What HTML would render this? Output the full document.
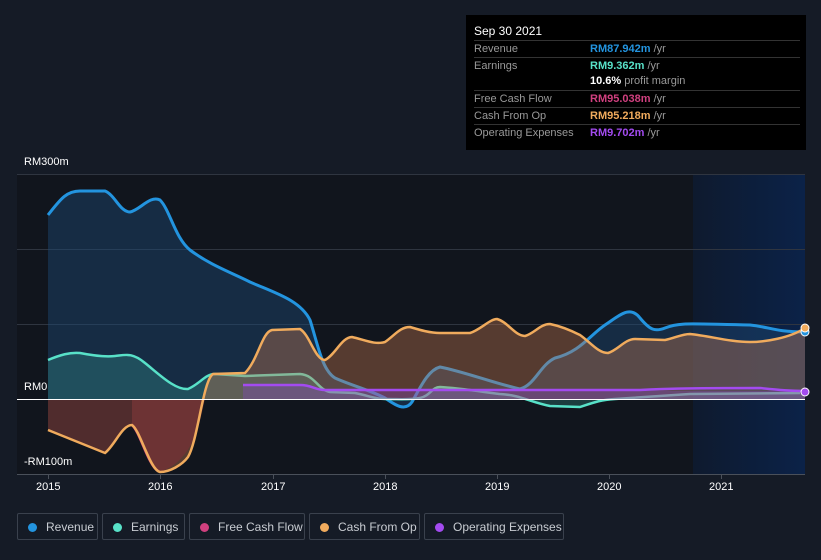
<!DOCTYPE html>
<html><head><meta charset="utf-8"><style>
body{margin:0;background:#151b26;width:821px;height:560px;overflow:hidden;font-family:"Liberation Sans",sans-serif;position:relative}
.tt{position:absolute;left:466px;top:15px;width:340px;height:135px;background:#000;color:#fff;font-size:11px}
.tt .h{position:absolute;left:8px;top:9px;font-size:12px}
.row{position:absolute;left:8px;width:326px;height:17px;border-top:1px solid #333;line-height:16px}
.row .l{position:absolute;left:0;color:#999}
.row .v{position:absolute;left:116px;color:#999}
.lg{position:absolute;top:513px;height:27px;border:1px solid #3a414d;border-radius:2px;color:#c8ccd2;font-size:12px;line-height:27px;box-sizing:border-box}
.lg i{display:inline-block;width:9px;height:9px;border-radius:50%;margin:0 9px 0 10px;vertical-align:-1px}
.ax{position:absolute;color:#fff;font-size:11px}
</style></head><body>
<svg width="821" height="560" style="position:absolute;left:0;top:0">
<defs><linearGradient id="fc" x1="0" x2="1"><stop offset="0" stop-color="#0e1a2e"/><stop offset="1" stop-color="#0b2248"/></linearGradient></defs>
<rect x="17" y="174" width="676" height="300" fill="#11151d"/>
<rect x="693" y="174" width="112" height="300" fill="url(#fc)"/>
<g stroke="#2f3540" stroke-width="1"><line x1="17" y1="174.5" x2="805" y2="174.5"/><line x1="17" y1="249.5" x2="805" y2="249.5"/><line x1="17" y1="324.5" x2="805" y2="324.5"/><line x1="17" y1="474.5" x2="805" y2="474.5" stroke="#4a505a"/></g>
<g stroke="#4a505a"><line x1="48.5" y1="474" x2="48.5" y2="479"/><line x1="160.5" y1="474" x2="160.5" y2="479"/><line x1="273.5" y1="474" x2="273.5" y2="479"/><line x1="385.5" y1="474" x2="385.5" y2="479"/><line x1="497.5" y1="474" x2="497.5" y2="479"/><line x1="609.5" y1="474" x2="609.5" y2="479"/><line x1="721.5" y1="474" x2="721.5" y2="479"/></g>
<!-- revenue -->
<path d="M48,399 L48,215 C60,200 66,191 80,191 L105,191 C115,195 120,212 130,212 C140,210 150,195 160,200 C170,210 175,238 190,250 C210,265 230,272 250,282 C275,293 300,300 310,320 C318,345 322,370 335,378 C350,385 370,390 385,398 C395,405 405,412 412,402 C420,388 428,370 440,367 C465,372 490,382 520,389 C535,385 540,365 555,358 C580,352 590,335 605,325 C620,315 630,305 640,318 C650,330 655,332 665,328 C680,322 690,324 750,325 C770,327 775,332 805,332 L805,399 Z" fill="#1d4a75" fill-opacity="0.45" stroke="none"/>
<path d="M48,215 C60,200 66,191 80,191 L105,191 C115,195 120,212 130,212 C140,210 150,195 160,200 C170,210 175,238 190,250 C210,265 230,272 250,282 C275,293 300,300 310,320 C318,345 322,370 335,378 C350,385 370,390 385,398 C395,405 405,412 412,402 C420,388 428,370 440,367 C465,372 490,382 520,389 C535,385 540,365 555,358 C580,352 590,335 605,325 C620,315 630,305 640,318 C650,330 655,332 665,328 C680,322 690,324 750,325 C770,327 775,332 805,332" fill="none" stroke="#2394df" stroke-width="3"/>
<!-- earnings -->
<path d="M48,399 L48,360 C60,355 70,352 80,353 C95,356 105,357 115,356 C125,355 132,352 145,363 C160,375 175,390 188,389 C200,384 205,374 215,374 L245,376 L300,374 C315,375 318,390 330,392 L355,393 C370,396 375,399 385,399 C400,399 410,400 420,398 C430,396 432,387 440,387 C460,388 490,393 500,394 C520,395 530,402 550,406 L580,407 C595,402 600,400 615,399 L690,394 L800,393 L805,399 Z" fill="#3fb6a8" fill-opacity="0.25"/>
<path d="M48,360 C60,355 70,352 80,353 C95,356 105,357 115,356 C125,355 132,352 145,363 C160,375 175,390 188,389 C200,384 205,374 215,374 L245,376 L300,374 C315,375 318,390 330,392 L355,393 C370,396 375,399 385,399 C400,399 410,400 420,398 C430,396 432,387 440,387 C460,388 490,393 500,394 C520,395 530,402 550,406 L580,407 C595,402 600,400 615,399 L690,394 L800,393" fill="none" stroke="#58e1c8" stroke-width="2.5"/>
<!-- cfo -->
<path d="M48,399 L48,430 L105,453 C115,445 122,425 132,425 C140,430 150,470 160,472 C170,472 182,465 188,457 C198,440 203,380 213,374 L245,373 C258,360 262,332 272,330 L300,329 C310,335 315,360 325,360 C335,355 342,337 352,337 C365,340 375,345 385,342 C395,335 400,327 410,327 C420,330 430,333 440,333 L470,333 C480,330 490,319 497,319 C508,322 515,336 525,336 C535,333 540,324 550,324 C560,326 570,330 580,335 C590,342 598,353 608,353 C618,350 625,339 635,339 L665,340 C675,338 682,334 690,334 C710,336 730,342 750,342 C765,342 790,338 805,328 L805,399 Z" fill="#c97a50" fill-opacity="0.38"/>
<path d="M132,425 L132,399 L205,399 C200,420 195,460 160,472 C150,470 140,430 132,425 Z" fill="#8a2a3a" fill-opacity="0.45"/>
<path d="M48,399 L48,430 L105,453 C115,445 122,425 132,425 L132,399 Z" fill="#4a1e2a" fill-opacity="0.5"/>
<path d="M132,425 C140,432 148,465 158,471" fill="none" stroke="#d0407f" stroke-width="2.5"/>
<path d="M48,430 L105,453 C115,445 122,425 132,425 C140,430 150,470 160,472 C170,472 182,465 188,457 C198,440 203,380 213,374 L245,373 C258,360 262,332 272,330 L300,329 C310,335 315,360 325,360 C335,355 342,337 352,337 C365,340 375,345 385,342 C395,335 400,327 410,327 C420,330 430,333 440,333 L470,333 C480,330 490,319 497,319 C508,322 515,336 525,336 C535,333 540,324 550,324 C560,326 570,330 580,335 C590,342 598,353 608,353 C618,350 625,339 635,339 L665,340 C675,338 682,334 690,334 C710,336 730,342 750,342 C765,342 790,338 805,328" fill="none" stroke="#f0ab5d" stroke-width="2.5"/>
<!-- opex -->
<path d="M243,399 L243,385 L300,385 C312,385 315,390 325,390 L805,391 L805,399 Z" fill="#8c45d8" fill-opacity="0.3"/>
<path d="M243,385 L300,385 C312,385 315,390 325,390 L640,390 C660,389 680,388 760,388 C780,390 790,391 805,391" fill="none" stroke="#a34bf0" stroke-width="2.5"/>
<line x1="17" y1="399.5" x2="805" y2="399.5" stroke="#fff" stroke-width="1"/>
<circle cx="805" cy="332" r="4" fill="#2394df" stroke="#fff"/>
<circle cx="805" cy="328" r="4" fill="#f0ab5d" stroke="#fff"/>
<circle cx="805" cy="392" r="4" fill="#a34bf0" stroke="#fff"/>
</svg>
<div class="ax" style="left:24px;top:156px">RM300m</div>
<div class="ax" style="left:24px;top:381px">RM0</div>
<div class="ax" style="left:24px;top:456px">-RM100m</div>
<div class="ax" style="left:36px;top:481px">2015</div>
<div class="ax" style="left:148px;top:481px">2016</div>
<div class="ax" style="left:261px;top:481px">2017</div>
<div class="ax" style="left:373px;top:481px">2018</div>
<div class="ax" style="left:485px;top:481px">2019</div>
<div class="ax" style="left:597px;top:481px">2020</div>
<div class="ax" style="left:709px;top:481px">2021</div>
<div class="tt">
<div class="h">Sep 30 2021</div>
<div class="row" style="top:25px"><span class="l">Revenue</span><span class="v"><b style="color:#2394df">RM87.942m</b> /yr</span></div>
<div class="row" style="top:42px"><span class="l">Earnings</span><span class="v"><b style="color:#58e1c8">RM9.362m</b> /yr</span></div>
<div class="row" style="top:58px;border-top:none"><span class="v"><b style="color:#fff">10.6%</b> profit margin</span></div>
<div class="row" style="top:75px"><span class="l">Free Cash Flow</span><span class="v"><b style="color:#d0407f">RM95.038m</b> /yr</span></div>
<div class="row" style="top:92px"><span class="l">Cash From Op</span><span class="v"><b style="color:#f0ab5d">RM95.218m</b> /yr</span></div>
<div class="row" style="top:109px"><span class="l">Operating Expenses</span><span class="v"><b style="color:#a34bf0">RM9.702m</b> /yr</span></div>
</div>
<div class="lg" style="left:17px;width:81px"><i style="background:#2394df"></i>Revenue</div>
<div class="lg" style="left:102px;width:83px"><i style="background:#58e1c8"></i>Earnings</div>
<div class="lg" style="left:189px;width:116px"><i style="background:#d0407f"></i>Free Cash Flow</div>
<div class="lg" style="left:309px;width:111px"><i style="background:#f0ab5d"></i>Cash From Op</div>
<div class="lg" style="left:424px;width:140px"><i style="background:#a34bf0"></i>Operating Expenses</div>
</body></html>
